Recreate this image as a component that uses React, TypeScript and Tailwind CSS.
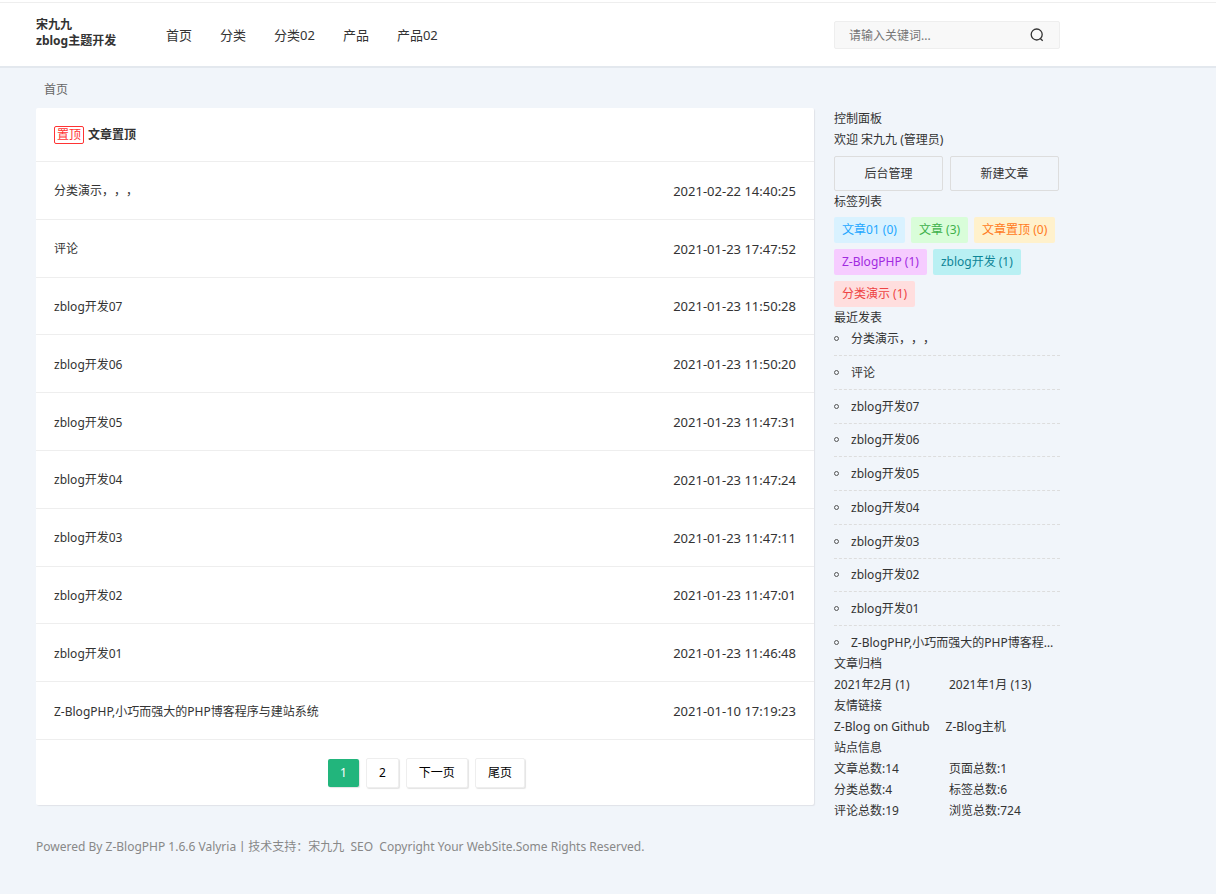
import React, { useState } from 'react';

const NAV = ['首页', '分类', '分类02', '产品', '产品02'];

const POSTS = [
  { title: '分类演示，，，', date: '2021-02-22 14:40:25' },
  { title: '评论', date: '2021-01-23 17:47:52' },
  { title: 'zblog开发07', date: '2021-01-23 11:50:28' },
  { title: 'zblog开发06', date: '2021-01-23 11:50:20' },
  { title: 'zblog开发05', date: '2021-01-23 11:47:31' },
  { title: 'zblog开发04', date: '2021-01-23 11:47:24' },
  { title: 'zblog开发03', date: '2021-01-23 11:47:11' },
  { title: 'zblog开发02', date: '2021-01-23 11:47:01' },
  { title: 'zblog开发01', date: '2021-01-23 11:46:48' },
  { title: 'Z-BlogPHP,小巧而强大的PHP博客程序与建站系统', date: '2021-01-10 17:19:23' },
];

const TAGS = [
  { label: '文章01 (0)', style: 'bg-[#d9f2ff] text-[#1ea7ff]' },
  { label: '文章 (3)', style: 'bg-[#d9fdd9] text-[#3fb14c]' },
  { label: '文章置顶 (0)', style: 'bg-[#fff1cc] text-[#ff7a22]' },
  { label: 'Z-BlogPHP (1)', style: 'bg-[#f6ccff] text-[#a12adf]' },
  { label: 'zblog开发 (1)', style: 'bg-[#b9f0f3] text-[#0d8597]' },
  { label: '分类演示 (1)', style: 'bg-[#ffdede] text-[#ee4444]' },
];

const STATS = ['文章总数:14', '页面总数:1', '分类总数:4', '标签总数:6', '评论总数:19', '浏览总数:724'];

const PAGE_LINK = 'rounded-xs border border-[#eee] bg-white px-3 text-black shadow-[1px_1px_1px_#e4e4e4]';

const Header: React.FC = () => {
  const [keyword, setKeyword] = useState('');

  return (
    <header className="border-b-2 border-[#e3e8ee] bg-white pt-[2px]">
      <div className="border-t border-[#eee]">
        <div className="ml-9 flex h-[63px] max-w-[1024px] items-center">
          <a href="#" className="w-[130px] pb-1 font-bold leading-4">
            宋九九
            <br />
            zblog主题开发
          </a>
          <nav className="flex flex-1 gap-7 pt-[2px] text-[13px]">
            {NAV.map((item) => (
              <a key={item} href="#">
                {item}
              </a>
            ))}
          </nav>
          <form
            className="flex h-7 w-[226px] items-center rounded-xs border border-[#eee] bg-[#f8f8f8] pl-[14px] pr-[15px]"
            onSubmit={(e) => e.preventDefault()}
          >
            <input
              type="text"
              aria-label="搜索"
              value={keyword}
              onChange={(e) => setKeyword(e.target.value)}
              placeholder="请输入关键词..."
              className="min-w-0 flex-1 pt-[2px] outline-none placeholder:text-[#757575]"
            />
            <button type="submit" aria-label="提交搜索">
              <svg viewBox="0 0 14 14" className="size-[14px]" fill="none" stroke="#333" strokeWidth="1.3">
                <circle cx="6.7" cy="6.5" r="5.5" />
                <path d="M10 10.2 L12.7 12.8" />
              </svg>
            </button>
          </form>
        </div>
      </div>
    </header>
  );
};

const PostList: React.FC = () => (
  <main className="rounded-xs bg-white shadow-[1px_1px_1px_#e0e3e8]">
    <h2 className="flex h-[54px] items-center gap-1 border-b border-[#eee] px-[18px] font-bold">
      <span className="rounded-xs border border-[#ff3333] px-[2px] font-normal leading-4 text-[#ff3333]">置顶</span>
      <a href="#">文章置顶</a>
    </h2>
    <ul className="grid min-h-[578px] auto-rows-fr">
      {POSTS.map((post) => (
        <li key={post.title} className="flex items-center justify-between border-b border-[#eee] px-[18px] pt-[2px]">
          <a href="#">{post.title}</a>
          <time className="text-[13px]">{post.date}</time>
        </li>
      ))}
    </ul>
    <nav aria-label="分页" className="flex items-center justify-center gap-[7px] pb-[17px] pl-[3px] pt-[18px] leading-7">
      <span className="rounded-xs bg-[#22b57c] px-3 text-white shadow-[1px_1px_1px_#e4e4e4]">1</span>
      <a href="#" className={PAGE_LINK}>2</a>
      <a href="#" className={PAGE_LINK}>下一页</a>
      <a href="#" className={PAGE_LINK}>尾页</a>
    </nav>
  </main>
);

const Sidebar: React.FC = () => (
  <aside className="leading-[21px]">
    <section>
      <h3>控制面板</h3>
      <p>欢迎 宋九九 (管理员)</p>
      <div className="mr-px mt-[6px] grid grid-cols-2 gap-[7px] text-center leading-[33px]">
        <a href="#" className="rounded-xs border border-[#ddd]">后台管理</a>
        <a href="#" className="rounded-xs border border-[#ddd]">新建文章</a>
      </div>
    </section>
    <section>
      <h3>标签列表</h3>
      <div className="mt-[5px] flex flex-wrap gap-[6px] leading-[26px]">
        {TAGS.map((tag) => (
          <a key={tag.label} href="#" className={`rounded-xs px-2 ${tag.style}`}>
            {tag.label}
          </a>
        ))}
      </div>
    </section>
    <section>
      <h3>最近发表</h3>
      <ul className="flex min-h-[325px] flex-col justify-between">
        {POSTS.map((post) => (
          <li
            key={post.title}
            className="flex items-center gap-3 border-b border-dashed border-[#ddd] pb-[6px] last:border-0 last:pb-0"
          >
            <span className="size-[5px] shrink-0 rounded-full border border-[#555]" />
            <a href="#" className="truncate">{post.title}</a>
          </li>
        ))}
      </ul>
    </section>
    <section>
      <h3>文章归档</h3>
      <div className="grid grid-cols-2 gap-x-1">
        <a href="#">2021年2月 (1)</a>
        <a href="#">2021年1月 (13)</a>
      </div>
    </section>
    <section>
      <h3>友情链接</h3>
      <div className="flex gap-4">
        <a href="#">Z-Blog on Github</a>
        <a href="#">Z-Blog主机</a>
      </div>
    </section>
    <section>
      <h3>站点信息</h3>
      <ul className="grid grid-cols-2 gap-x-1">
        {STATS.map((stat) => (
          <li key={stat}>{stat}</li>
        ))}
      </ul>
    </section>
  </aside>
);

const App: React.FC = () => {
  return (
    <div className="flow-root min-h-screen bg-[#f1f5fa] font-['Noto_Sans','Noto_Sans_CJK_SC',sans-serif] text-xs text-[#333] [text-spacing-trim:space-all]">
      <Header />
      <div className="ml-9 max-w-[1024px]">
        <div className="px-2 pb-2 pt-3 leading-5 text-[#666]">
          <a href="#">首页</a>
        </div>
        <div className="grid grid-cols-[minmax(0,1fr)_226px] items-start gap-5">
          <PostList />
          <Sidebar />
        </div>
        <footer className="pt-4 leading-5 text-[#888]">
          Powered By <a href="#">Z-BlogPHP 1.6.6 Valyria</a>丨技术支持：<a href="#">宋九九</a>&nbsp; <a href="#">SEO</a>&nbsp; Copyright
          Your WebSite.Some Rights Reserved.
        </footer>
      </div>
    </div>
  );
};

export default App;
